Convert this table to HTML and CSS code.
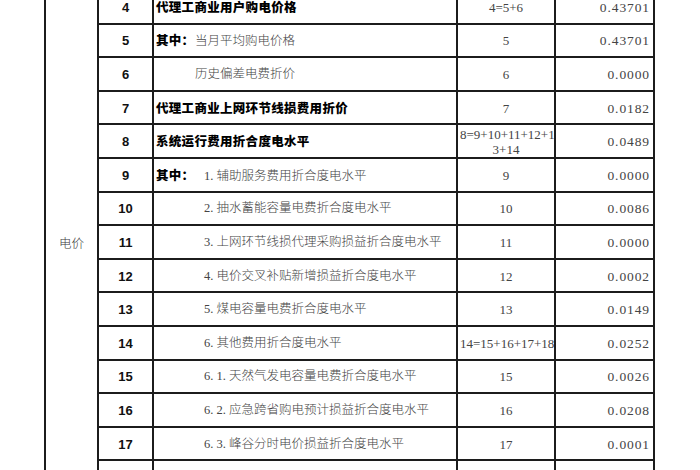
FILE: index.html
```html
<!DOCTYPE html>
<html lang="zh-CN">
<head>
<meta charset="utf-8">
<title>电价表</title>
<link rel="stylesheet" href="styles.css">
</head>
<body>
<div class="page">
<table class="sheet">
<colgroup>
<col class="c-cat"><col class="c-no"><col class="c-item"><col class="c-formula"><col class="c-value">
</colgroup>
<tbody>
<tr><td class="cat" rowspan="15">电价</td><td class="no">4</td><td class="item"><span class="b">代理工商业用户购电价格</span></td><td class="formula">4=5+6</td><td class="value">0.43701</td></tr>
<tr><td class="no">5</td><td class="item"><span class="b lead lead-a">其中：</span>当月平均购电价格</td><td class="formula">5</td><td class="value">0.43701</td></tr>
<tr><td class="no">6</td><td class="item ind-a">历史偏差电费折价</td><td class="formula">6</td><td class="value">0.0000</td></tr>
<tr><td class="no">7</td><td class="item"><span class="b">代理工商业上网环节线损费用折价</span></td><td class="formula">7</td><td class="value">0.0182</td></tr>
<tr><td class="no">8</td><td class="item"><span class="b">系统运行费用折合度电水平</span></td><td class="formula two">8=9+10+11+12+1<br>3+14</td><td class="value">0.0489</td></tr>
<tr><td class="no">9</td><td class="item"><span class="b lead lead-b">其中：</span>1. 辅助服务费用折合度电水平</td><td class="formula">9</td><td class="value">0.0000</td></tr>
<tr><td class="no">10</td><td class="item ind-b">2. 抽水蓄能容量电费折合度电水平</td><td class="formula">10</td><td class="value">0.0086</td></tr>
<tr><td class="no">11</td><td class="item ind-b">3. 上网环节线损代理采购损益折合度电水平</td><td class="formula">11</td><td class="value">0.0000</td></tr>
<tr><td class="no">12</td><td class="item ind-b">4. 电价交叉补贴新增损益折合度电水平</td><td class="formula">12</td><td class="value">0.0002</td></tr>
<tr><td class="no">13</td><td class="item ind-b">5. 煤电容量电费折合度电水平</td><td class="formula">13</td><td class="value">0.0149</td></tr>
<tr><td class="no">14</td><td class="item ind-b">6. 其他费用折合度电水平</td><td class="formula">14=15+16+17+18</td><td class="value">0.0252</td></tr>
<tr><td class="no">15</td><td class="item ind-b">6. 1. 天然气发电容量电费折合度电水平</td><td class="formula">15</td><td class="value">0.0026</td></tr>
<tr><td class="no">16</td><td class="item ind-b">6. 2. 应急跨省购电预计损益折合度电水平</td><td class="formula">16</td><td class="value">0.0208</td></tr>
<tr><td class="no">17</td><td class="item ind-b">6. 3. 峰谷分时电价损益折合度电水平</td><td class="formula">17</td><td class="value">0.0001</td></tr>
<tr><td class="no"></td><td class="item"></td><td class="formula"></td><td class="value"></td></tr>
</tbody>
</table>
</div>
</body>
</html>
```

FILE: styles.css
```css
html, body {
  margin: 0;
  padding: 0;
  background: #ffffff;
  overflow: hidden;
}
.page {
  width: 700px;
  height: 470px;
  overflow: hidden;
  padding-left: 44px;
  box-sizing: border-box;
}
.sheet {
  border-collapse: collapse;
  table-layout: fixed;
  width: 611px;
  margin-top: -11px;
  font-family: "Liberation Serif", "Noto Sans CJK SC", serif;
  font-size: 12.5px;
  color: #444;
}
.c-cat { width: 53px; }
.c-no { width: 55px; }
.c-item { width: 304px; }
.c-formula { width: 98px; }
.c-value { width: 99px; }
.sheet td {
  border: 2px solid #1c1c1c;
  height: 33.6px;
  box-sizing: border-box;
  padding: 1px 2px 0;
  vertical-align: middle;
  white-space: nowrap;
  overflow: hidden;
  line-height: 15px;
}
.cat {
  text-align: center;
  font-family: "Noto Sans CJK SC", sans-serif;
  font-weight: 300;
  font-size: 12.5px;
  color: #3a3a3a;
}
.no {
  text-align: center;
  font-family: "Liberation Sans", Arial, sans-serif;
  font-weight: 700;
  font-size: 13px;
  color: #111;
}
.item {
  font-family: "Liberation Serif", "Noto Sans CJK SC", serif;
  font-weight: 300;
  color: #444;
}
.b {
  font-family: "Noto Sans CJK SC", sans-serif;
  font-weight: 900;
  font-size: 12.5px;
  letter-spacing: 0.3px;
  color: #000;
}
.lead { display: inline-block; }
.lead-a { width: 39px; }
.lead-b { width: 48px; }
.ind-a { padding-left: 41px !important; }
.ind-b { padding-left: 50px !important; }
.formula {
  text-align: center;
  font-size: 13px;
  color: #444;
}
.value {
  text-align: right;
  font-size: 13.5px;
  letter-spacing: 0.9px;
  padding-right: 3px !important;
  color: #444;
}
```
